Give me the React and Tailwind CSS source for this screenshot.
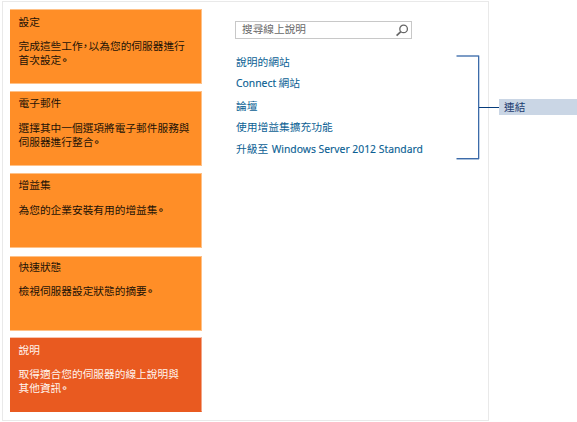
const LATIN = "font-['Noto_Sans',sans-serif] text-[10.35px] [-webkit-text-stroke:0.12px]";

function Stop() {
  return <span className="ml-[0.7px] [font-feature-settings:'halt'] [-webkit-text-stroke:0.25px]">。</span>;
}

function Card({ title, active, className = "", titleClass = "mt-[4px]", bodyClass = "mt-[11px] leading-[14px]", children }) {
  return (
    <section
      className={`h-[75px] w-[192px] shrink-0 border-y border-r pl-[8.5px] text-[10.7px] ${
        active
          ? "border-t-[#f7c4b0] border-b-[#e95a20] border-r-[#f3a587] bg-[#e95a20] text-[#fff4ee]"
          : "border-[#ffc187] bg-[#ff8e27] text-[#1c1206]"
      } ${className}`}
    >
      <h2 className={`leading-[14px] ${titleClass}`}>{title}</h2>
      <p className={`whitespace-nowrap ${bodyClass}`}>{children}</p>
    </section>
  );
}

function SearchIcon() {
  return (
    <svg className="mr-[2px] h-[13px] w-[14px]" viewBox="0 0 14 13" fill="none" stroke="#666">
      <circle cx="8.6" cy="4.9" r="3.8" strokeWidth="1.3" />
      <path d="M5.8 7.7 L1.6 11.7" strokeWidth="1.7" />
    </svg>
  );
}

export default function App() {
  return (
    <div className="flex h-[422px] w-[577px] overflow-hidden bg-white pt-px pl-[2px] font-['Noto_Sans_CJK_TC',sans-serif]">
      <main className="flex h-[420px] w-[487px] shrink-0 border border-[#e9e9e9]">
        <nav className="flex flex-col pt-[7px] pl-[7px]">
          <Card title="設定" titleClass="mt-[5px]" bodyClass="mt-[10px] leading-[14px]">
            完成這些工作<span className="mr-[0.6px] [font-feature-settings:'halt']">，</span>以為您的伺服器進行
            <br />
            首次設定<Stop />
          </Card>
          <Card title="電子郵件" className="mt-[7px]" bodyClass="mt-[11px] leading-[13.5px]">
            選擇其中一個選項將電子郵件服務與
            <br />
            伺服器進行整合<Stop />
          </Card>
          <Card title="增益集" className="mt-[7px]">
            為您的企業安裝有用的增益集<Stop />
          </Card>
          <Card title="快速狀態" className="mt-[8px]" titleClass="mt-[3px]" bodyClass="mt-[10px] leading-[14px]">
            檢視伺服器設定狀態的摘要<Stop />
          </Card>
          <Card title="說明" active className="mt-[6px]" titleClass="mt-[5px]" bodyClass="mt-[10px] leading-[14px]">
            取得適合您的伺服器的線上說明與
            <br />
            其他資訊<Stop />
          </Card>
        </nav>
        <section className="ml-[33px] flex flex-col pt-[19px]">
          <div className="flex h-[18px] w-[177px] items-center justify-between border border-[#c8c8c8] pl-[6px] text-[10.67px] leading-[16px] text-[#686868]">
            <span className="-mt-[2px]">搜尋線上說明</span>
            <SearchIcon />
          </div>
          <ul className="mt-[12px] flex flex-col pl-px text-[10.75px] leading-[22px] whitespace-nowrap text-[#0b5f94]">
            <li className="h-[21px]">說明的網站</li>
            <li className="h-[23px]">
              <span className={LATIN}>Connect</span> 網站
            </li>
            <li className="h-[21px]">論壇</li>
            <li className="h-[22px]">使用增益集擴充功能</li>
            <li className="h-[22px]">
              升級至 <span className={`ml-px ${LATIN}`}>Windows Server 2012 Standard</span>
            </li>
          </ul>
        </section>
      </main>
      <aside className="mt-[54px] -ml-[33px] flex h-[104px] shrink-0 items-center">
        <svg className="h-[105px] w-[43px]" viewBox="0 0 43 105" fill="none">
          <path d="M0.5 1 H22.5" stroke="#7c9cc6" strokeWidth="2" />
          <path d="M0.5 103.5 H22.5" stroke="#3c6ba9" />
          <path d="M0.5 104.5 H23" stroke="#a9c0dc" />
          <path d="M22.5 0.5 V104" stroke="#3c6ba9" />
          <path d="M23.5 0.5 V104" stroke="#c3d2e6" />
          <path d="M23 52.5 H43" stroke="#063c7c" />
        </svg>
        <div className="h-[16px] w-[79px] bg-[#cad6e5] pl-[5px] text-[10.67px] leading-[16px] text-[#1c3c70]">連結</div>
      </aside>
    </div>
  );
}
